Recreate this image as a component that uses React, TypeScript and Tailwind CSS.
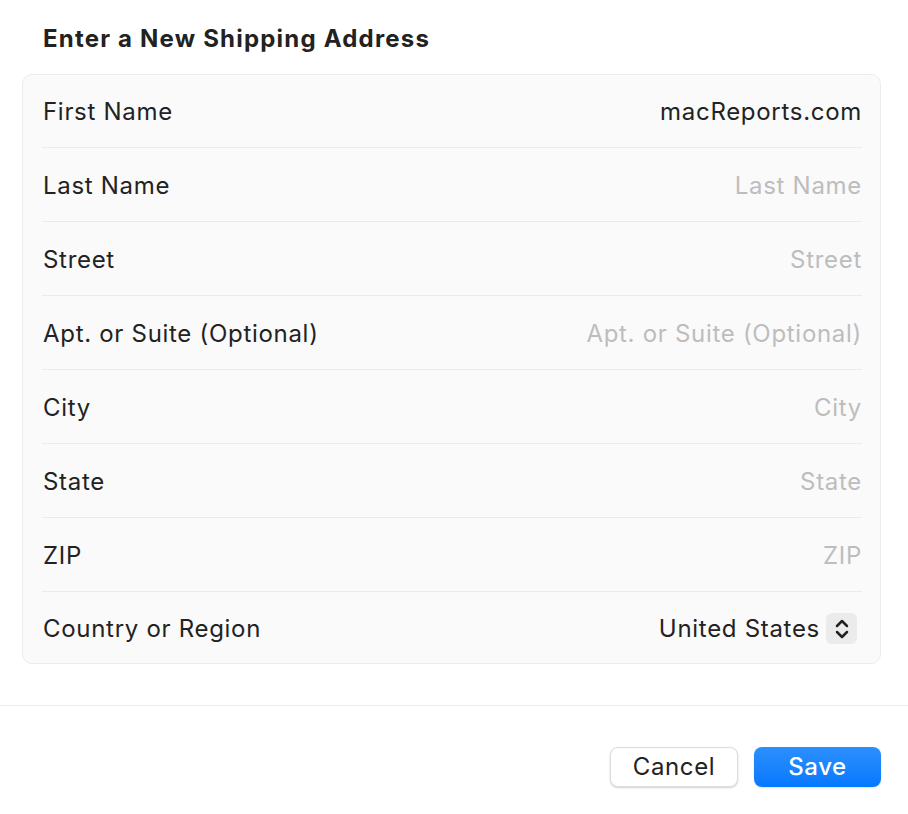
import React from "react";

const rows: { label: string; value: string; placeholder?: boolean; select?: boolean }[] = [
  { label: "First Name", value: "macReports.com" },
  { label: "Last Name", value: "Last Name", placeholder: true },
  { label: "Street", value: "Street", placeholder: true },
  { label: "Apt. or Suite (Optional)", value: "Apt. or Suite (Optional)", placeholder: true },
  { label: "City", value: "City", placeholder: true },
  { label: "State", value: "State", placeholder: true },
  { label: "ZIP", value: "ZIP", placeholder: true },
  { label: "Country or Region", value: "United States", select: true },
];

export default function App() {
  return (
    <div
      className="w-[908px] h-[814px] bg-white text-[#222222] flex flex-col"
      style={{ fontFamily: "Inter, 'Open Sans', sans-serif" }}
    >
      <div className="pl-[22px] pr-[27px] pt-[24px]">
        <h1 className="pl-[21px] text-[24px] leading-[30px] font-bold tracking-[1.2px] text-[#222222]">
          Enter a New Shipping Address
        </h1>
        <div className="mt-[20px] rounded-[10px] border border-[#ececec] bg-[#fafafa] pl-[19px] pr-[18px]">
          {rows.map((r, i) => (
            <div
              key={r.label}
              className={
                "flex items-center justify-between pt-[2px] border-[#ebebeb] " +
                (i === 0 ? "h-[73px] border-b" : i === rows.length - 1 ? "h-[71px]" : "h-[74px] border-b")
              }
            >
              <span className="pl-px text-[24px] leading-none tracking-[0.7px]">{r.label}</span>
              {r.select ? (
                <div className="flex items-center gap-[6px] pr-[5px]">
                  <span className="text-[24px] leading-none tracking-[0.7px]">{r.value}</span>
                  <div className="w-[31px] h-[31px] rounded-[6px] bg-[#ebebeb] flex items-center justify-center">
                    <svg width="16" height="24" viewBox="0 0 16 24" fill="none">
                      <path d="M3 9 L8 4 L13 9" stroke="#222" strokeWidth="2.5" strokeLinecap="round" strokeLinejoin="round" />
                      <path d="M3 15 L8 20 L13 15" stroke="#222" strokeWidth="2.5" strokeLinecap="round" strokeLinejoin="round" />
                    </svg>
                  </div>
                </div>
              ) : (
                <span
                  className={
                    "text-[24px] leading-none tracking-[0.7px] " +
                    (r.placeholder ? "text-[#bdbdbd]" : "text-[#222222]")
                  }
                >
                  {r.value}
                </span>
              )}
            </div>
          ))}
        </div>
      </div>
      <div className="mt-[41px] border-t border-[#ebebeb]" />
      <div className="flex justify-end gap-[16px] pr-[27px] pt-[41px]">
        <button className="w-[128px] h-[40px] rounded-[8px] bg-white border border-[#dcdcdc] shadow-[0_1px_2px_rgba(0,0,0,0.18)] text-[24px] tracking-[0.6px] text-[#222222]">
          Cancel
        </button>
        <button className="w-[127px] h-[40px] rounded-[8px] bg-gradient-to-b from-[#2b8ffd] to-[#0478ff] text-[24px] tracking-[0.6px] font-medium text-white shadow-[0_1px_2px_rgba(0,0,0,0.12)]">
          Save
        </button>
      </div>
    </div>
  );
}
